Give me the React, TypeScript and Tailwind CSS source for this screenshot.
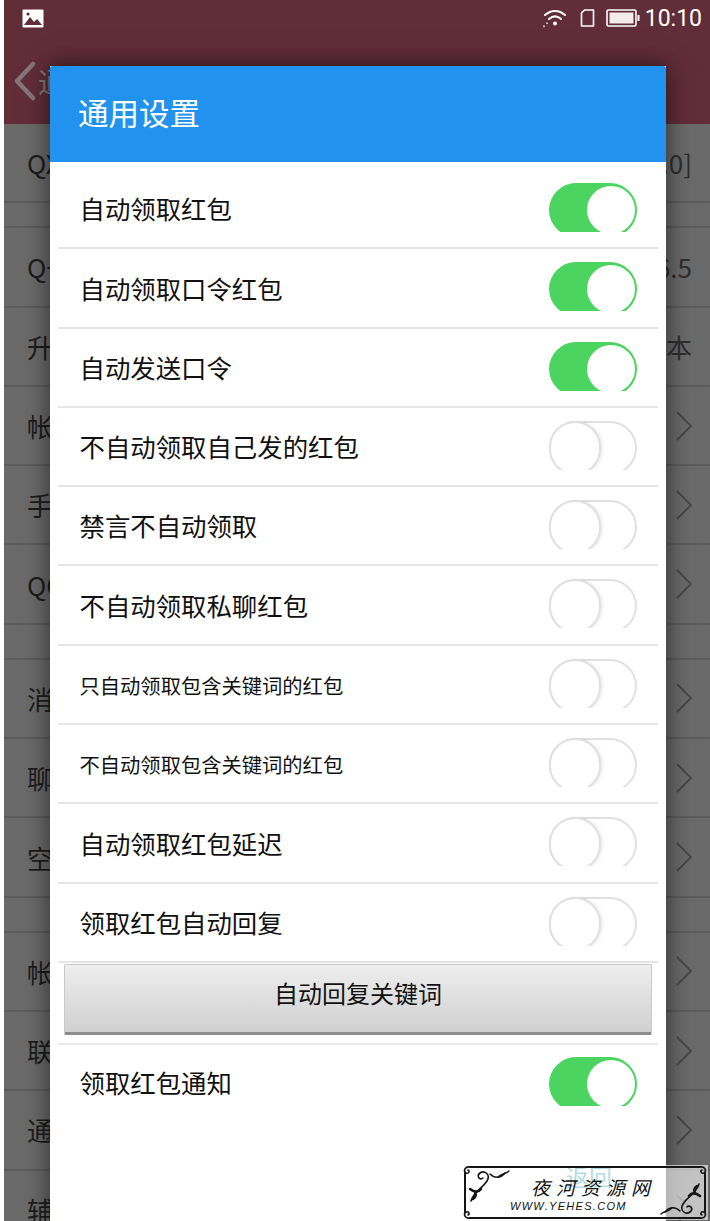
type BackRow = { label: string; right?: string; gapBefore?: boolean };

const backRows: BackRow[] = [
  { label: 'QX模块版本', right: '[7.0]' },
  { label: 'Q一键版本', right: '6.5', gapBefore: true },
  { label: '升级到新版本', right: '新版本' },
  { label: '帐号管理' },
  { label: '手机联系人' },
  { label: 'QQ达人' },
  { label: '消息通知', gapBefore: true },
  { label: '聊天记录' },
  { label: '空间清理' },
  { label: '帐号安全', gapBefore: true },
  { label: '联系人' },
  { label: '通用' },
  { label: '辅助功能' },
];

const settings: { label: string; on: boolean; small?: boolean }[] = [
  { label: '自动领取红包', on: true },
  { label: '自动领取口令红包', on: true },
  { label: '自动发送口令', on: true },
  { label: '不自动领取自己发的红包', on: false },
  { label: '禁言不自动领取', on: false },
  { label: '不自动领取私聊红包', on: false },
  { label: '只自动领取包含关键词的红包', on: false, small: true },
  { label: '不自动领取包含关键词的红包', on: false, small: true },
  { label: '自动领取红包延迟', on: false },
  { label: '领取红包自动回复', on: false },
];

function Toggle({ on }: { on: boolean }) {
  // the switch is cut off a few pixels above its lower edge
  return (
    <div className="h-[49px] w-[88px] shrink-0 overflow-hidden">
      {on ? (
        <div className="relative h-[54px] w-[88px] rounded-full bg-[#4bd460]">
          <div className="absolute left-[38px] top-[3px] h-[48px] w-[48px] rounded-full bg-white" />
        </div>
      ) : (
        <div className="relative h-[54px] w-[88px] rounded-full border-2 border-[#e0e0e0] bg-white">
          <div className="absolute left-[-2px] top-[-2px] h-[54px] w-[52px] rounded-full border-2 border-[#e0e0e0] bg-white shadow-[2px_0_3px_rgba(0,0,0,0.07)]" />
        </div>
      )}
    </div>
  );
}

function SettingRow({ label, on, small }: { label: string; on: boolean; small?: boolean }) {
  return (
    <div className="flex h-[79.3px] items-start justify-between border-b-2 border-[#e3e6e5] pl-[21.5px] pr-[21px]">
      <span className={`${small ? 'text-[20.3px]' : 'text-[25.4px]'} flex h-[78px] items-center leading-none text-[#111]`}>
        {label}
      </span>
      <div className="pt-[13px]">
        <Toggle on={on} />
      </div>
    </div>
  );
}

function StatusBar() {
  return (
    <div className="flex h-[36px] items-center justify-between pl-[18px] pr-[8px] text-white">
      <svg width="22" height="19" viewBox="0 0 22 19">
        <rect x="0.5" y="0.5" width="21" height="18" rx="1" fill="#fff" />
        <path d="M2 16 L8 8 L12 13 L15 10 L20 16 Z" fill="#612d39" />
        <circle cx="6" cy="5" r="1.6" fill="#612d39" />
      </svg>
      <div className="flex items-center">
        <svg width="24" height="20" viewBox="0 0 24 20" fill="none" stroke="#fff" strokeLinecap="round">
          <path d="M2 7 C8 1.5 16 1.5 22 7" strokeWidth="2" />
          <path d="M6 11 C10 7.5 14 7.5 18 11" strokeWidth="2" />
          <circle cx="12" cy="15.5" r="2" fill="#fff" stroke="none" />
          <path d="M1 18v.5M4 15v.5" strokeWidth="1.4" />
        </svg>
        <svg className="ml-[13px]" width="15" height="18" viewBox="0 0 15 18" fill="none" stroke="#fff" strokeWidth="1.6">
          <path d="M4.5 1 H13.5 V17 H1.5 V4 Z" strokeLinejoin="round" />
        </svg>
        <svg className="ml-[11px]" width="34" height="18" viewBox="0 0 34 18">
          <rect x="1" y="1" width="29" height="16" rx="1.5" fill="none" stroke="#fff" strokeWidth="1.6" />
          <rect x="3.5" y="3.5" width="24" height="11" fill="#f4ecec" />
          <rect x="31.5" y="6" width="2" height="6" fill="#fff" />
        </svg>
        <span className="ml-[5px] font-['Roboto',sans-serif] text-[23px] leading-none">10:10</span>
      </div>
    </div>
  );
}

function BackList() {
  return (
    <div className="bg-[#6a6a6a]">
      {backRows.map((row) => (
        <div key={row.label}>
          {row.gapBefore && <div className={`${row.label.startsWith('Q') ? 'h-[25px]' : 'h-[35px]'} border-b-2 border-[#5c5c5c]`} />}
          <div className="flex h-[79.3px] items-center justify-between border-b-2 border-[#5c5c5c] pl-[23px] pr-[18px] text-[26px] text-[#1c1c1c]">
            <span>{row.label}</span>
            {row.right ? (
              <span className="text-[#2e2e2e]">{row.right}</span>
            ) : (
              <svg width="16" height="30" viewBox="0 0 16 30" fill="none" stroke="#474747" strokeWidth="1.8">
                <path d="M1 1 L15 15 L1 29" />
              </svg>
            )}
          </div>
        </div>
      ))}
    </div>
  );
}

function BadgeFrame() {
  return (
    <svg className="absolute inset-0" width="246" height="55" viewBox="0 0 246 55" fill="none" stroke="#151515" strokeLinecap="round">
      {/* frame with a small loop at each corner */}
      <path d="M8 2 H238 M8 53 H238 M3 8 V47 M243 8 V47" strokeWidth="2" />
      <path d="M8 2 C3 1 1 6 4 8 C7 9 8 6 6 5" strokeWidth="1.6" />
      <path d="M238 2 C243 1 245 6 242 8 C239 9 238 6 240 5" strokeWidth="1.6" />
      <path d="M8 53 C3 54 1 49 4 47 C7 46 8 49 6 50" strokeWidth="1.6" />
      <path d="M238 53 C243 54 245 49 242 47 C239 46 238 49 240 50" strokeWidth="1.6" />
      {/* top-left scroll */}
      <path d="M9 36 C12 26 20 24 25 16 C29 9 22 5 18 8 C14 11 18 16 21 13" strokeWidth="1.6" />
      <path d="M8 24 C12 27 16 28 19 24 M11 34 C14 32 14 29 13 27" strokeWidth="2.6" />
      <path d="M28 9 C33 14 39 13 43 8" strokeWidth="1.6" />
      <path d="M36 12 C40 8 44 9 47 6" strokeWidth="1.4" />
      {/* bottom-right scroll */}
      <path d="M237 19 C234 29 226 31 221 39 C217 46 224 50 228 47 C232 44 228 39 225 42" strokeWidth="1.6" />
      <path d="M238 31 C234 28 230 27 227 31 M235 21 C232 23 232 26 233 28" strokeWidth="2.6" />
      <path d="M218 46 C213 41 207 42 203 47" strokeWidth="1.6" />
      <path d="M210 43 C206 47 202 46 199 49" strokeWidth="1.4" />
    </svg>
  );
}

function SiteBadge() {
  return (
    <div className="absolute bottom-[1px] right-[2px] z-20 h-[55px] w-[246px] bg-white/60">
      <BadgeFrame />
      <div className="relative flex flex-col items-start pt-[9px] text-[#111]">
        <span className="ml-[69px] whitespace-nowrap text-[19px] italic leading-[25px] tracking-[6px]">夜河资源网</span>
        <span className="ml-[48px] whitespace-nowrap font-['Liberation_Sans',sans-serif] text-[11px] italic leading-[14px] tracking-[1.3px]">WWW.YEHES.COM</span>
      </div>
    </div>
  );
}

export default function App() {
  return (
    <div className="relative h-[1221px] w-[710px] overflow-hidden bg-white pl-[4px] font-['Noto_Sans_CJK_SC','Liberation_Sans',sans-serif]">
      {/* page behind the dialog */}
      <div className="h-[124px] bg-[#612d39]">
        <StatusBar />
        <div className="flex items-center pl-[8px] pt-[24px]">
          <svg width="26" height="42" viewBox="0 0 26 42" fill="none" stroke="#85767b" strokeWidth="4.5" strokeLinecap="round" strokeLinejoin="round">
            <path d="M21 4 L5 21 L21 38" />
          </svg>
          <span className="text-[28px] leading-none text-[#85767b]">通用</span>
        </div>
      </div>
      <BackList />

      {/* settings dialog */}
      <div className="absolute bottom-0 left-[50px] top-[66px] z-10 w-[616px] bg-white shadow-[0_0_24px_rgba(0,0,0,0.6)]">
        <div className="flex h-[96px] items-center rounded-t-[2px] bg-[#2192ee] pb-[3px] pl-[28px] text-[30.5px] text-white">通用设置</div>
        <div className="mx-[8px] pt-[8px]">
          {settings.map((s) => (
            <SettingRow key={s.label} label={s.label} on={s.on} small={s.small} />
          ))}
          <div className="border-b-2 border-[#e9ebea] px-[6px] pb-[8px] pt-[1px]">
            <button className="flex h-[71px] w-full items-center justify-center rounded-[2px] border border-[#c9c9c9] border-b-[3px] border-b-[#8c8c8c] bg-gradient-to-b from-[#eeeeee] to-[#d0d0d0] pb-[10px] text-[24px] text-[#111]">
              自动回复关键词
            </button>
          </div>
          <div className="flex items-start justify-between pl-[21.5px] pr-[21px] pt-[12px]">
            <span className="flex h-[51px] items-center text-[25.4px] leading-none text-[#111]">领取红包通知</span>
            <Toggle on />
          </div>
        </div>
        <div className="absolute bottom-[33px] right-[54px] text-[23px] leading-none text-[#3aa8bc]">返回</div>
      </div>

      <SiteBadge />
    </div>
  );
}
